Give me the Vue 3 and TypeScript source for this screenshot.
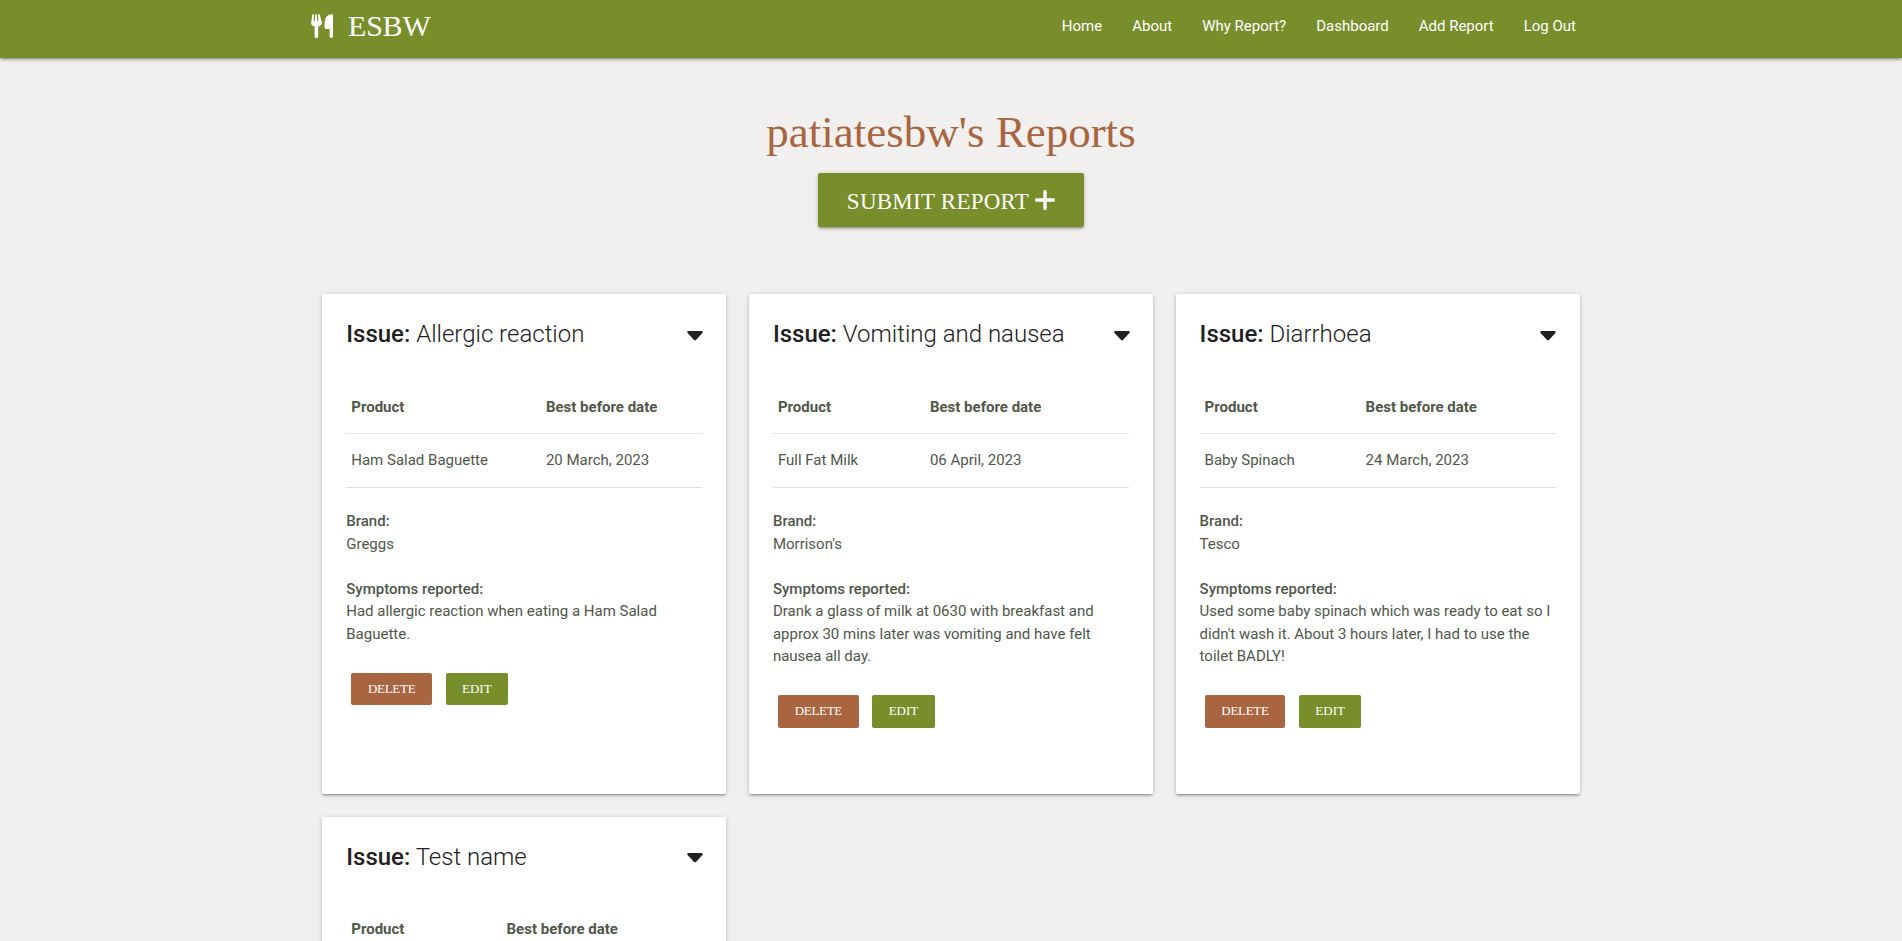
<script setup lang="ts">
interface Report {
  issue: string
  product: string
  date: string
  brand: string
  symptoms: string
  split: string
}

const links: string[] = ['Home', 'About', 'Why Report?', 'Dashboard', 'Add Report', 'Log Out']

const reports: Report[] = [
  { issue: 'Allergic reaction', product: 'Ham Salad Baguette', date: '20 March, 2023', brand: 'Greggs', symptoms: 'Had allergic reaction when eating a Ham Salad Baguette.', split: '194.7px' },
  { issue: 'Vomiting and nausea', product: 'Full Fat Milk', date: '06 April, 2023', brand: "Morrison's", symptoms: 'Drank a glass of milk at 0630 with breakfast and approx 30 mins later was vomiting and have felt nausea all day.', split: '152px' },
  { issue: 'Diarrhoea', product: 'Baby Spinach', date: '24 March, 2023', brand: 'Tesco', symptoms: "Used some baby spinach which was ready to eat so I didn't wash it. About 3 hours later, I had to use the toilet BADLY!", split: '161px' },
  { issue: 'Test name', product: 'Test product', date: '20 March, 2023', brand: 'Test brand', symptoms: 'Test symptoms.', split: '155.3px' },
]
</script>

<template>
  <div class="page">
    <nav class="nav">
      <div class="container nav-inner">
        <a class="brand">
          <svg class="cutlery" viewBox="0 0 22 24">
            <path d="M.2 8.2 1.4.6Q1.5 0 2.1 0T2.8.7V6.5Q2.8 7.2 3.3 7.2T3.8 6.5L4.3.7Q4.4 0 5 0T5.7.7L6.2 6.5Q6.2 7.2 6.7 7.2T7.2 6.5V.7Q7.2 0 7.9 0T8.7.6L10.8 8.2Q11.2 11.5 7.2 12.6V22.5Q7.2 24 5.4 24T3.6 22.5V12.6Q-.4 11.5.2 8.2Z" />
            <path d="M20.8 0Q22 0 22 1.3V22.6Q22 24 20.3 24T18.6 22.5V15H15Q13.6 15 13.6 13.7V8.5Q13.6 1 20.8 0Z" />
          </svg>
          <span>ESBW</span>
        </a>
        <ul class="links">
          <li v-for="link in links" :key="link">{{ link }}</li>
        </ul>
      </div>
    </nav>

    <main class="container">
      <header class="heading">
        <h1>patiatesbw's Reports</h1>
        <button class="submit">
          <span>SUBMIT REPORT</span>
          <svg class="plus" viewBox="0 0 20 20"><path d="M10 1.6V18.4M1.6 10H18.4" /></svg>
        </button>
      </header>

      <section class="grid">
        <article v-for="report in reports" :key="report.issue" class="card">
          <div class="card-title">
            <span><b>Issue:</b> {{ report.issue }}</span>
            <svg class="caret" viewBox="0 0 16 10"><path d="M1.3 0H14.7Q16.5.5 15.4 2L9.2 8.8Q8 9.8 6.8 8.8L.6 2Q-.5.5 1.3 0Z" /></svg>
          </div>
          <div class="table" :style="{ '--split': report.split }">
            <div class="row head"><span>Product</span><span>Best before date</span></div>
            <div class="row"><span>{{ report.product }}</span><span>{{ report.date }}</span></div>
          </div>
          <p><b>Brand:</b><br />{{ report.brand }}</p>
          <p><b>Symptoms reported:</b><br />{{ report.symptoms }}</p>
          <div class="actions">
            <button class="small delete">DELETE</button>
            <button class="small edit">EDIT</button>
          </div>
        </article>
      </section>
    </main>
  </div>
</template>

<style>
body {
  background: #f1f0ee;
}
</style>

<style scoped>
.page {
  height: 941px;
  overflow: hidden;
  background: #f1f0ee;
  color: #4f5749;
  font: 15px/22.5px Roboto, sans-serif;
}
.container {
  width: 1280px;
  margin: 0 auto;
}
.nav {
  height: 58px;
  background: #788e2b;
  color: #fff;
  box-shadow: 0 2px 2px 0 rgba(0, 0, 0, 0.14), 0 3px 1px -2px rgba(0, 0, 0, 0.12), 0 1px 5px 0 rgba(0, 0, 0, 0.2);
}
.nav-inner {
  display: flex;
  justify-content: space-between;
  align-items: center;
  height: 52px;
}
.brand {
  display: flex;
  align-items: center;
  gap: 15px;
  font: 30px/52px 'Liberation Serif', serif;
  letter-spacing: -0.2px;
}
.cutlery {
  width: 22px;
  height: 24px;
  fill: #fff;
}
.links {
  display: flex;
  margin: 0;
  padding: 0;
  list-style: none;
  font-weight: 400;
}
.links li {
  padding: 0 15px;
}
.heading {
  display: flex;
  flex-direction: column;
  align-items: center;
  height: 236px;
}
h1 {
  margin: 49px 0 0;
  color: #a86540;
  font: 45px/50px 'Liberation Serif', serif;
}
.submit {
  display: flex;
  align-items: center;
  justify-content: center;
  gap: 6px;
  width: 266px;
  height: 54px;
  margin-top: 16px;
  padding: 0;
  border: 0;
  border-radius: 2px;
  background: #788e2b;
  color: #fff;
  font: 23px/52px 'Liberation Serif', serif;
  letter-spacing: 0.25px;
  box-shadow: 0 2px 2px 0 rgba(0, 0, 0, 0.14), 0 3px 1px -2px rgba(0, 0, 0, 0.12), 0 1px 5px 0 rgba(0, 0, 0, 0.2);
}
.submit span {
  padding-top: 3px;
}
.plus {
  width: 20px;
  height: 20px;
  fill: none;
  stroke: #fff;
  stroke-width: 3.4;
  stroke-linecap: round;
}
.grid {
  display: grid;
  grid-template-columns: repeat(3, 1fr);
  gap: 22.77px 22.5px;
  padding: 0 11.25px;
}
.card {
  box-sizing: border-box;
  height: 500px;
  padding: 24px;
  border-radius: 2px;
  background: #fff;
  box-shadow: 0 2px 2px 0 rgba(0, 0, 0, 0.14), 0 3px 1px -2px rgba(0, 0, 0, 0.12), 0 1px 5px 0 rgba(0, 0, 0, 0.2);
}
.card-title {
  display: flex;
  justify-content: space-between;
  align-items: center;
  height: 32px;
  color: #212121;
  font-size: 24px;
  font-weight: 300;
}
b {
  font-weight: 500;
}
.caret {
  width: 16px;
  height: 10px;
  margin: 3px -0.5px 0 0;
  fill: #212121;
}
.table {
  margin-top: 30.7px;
}
.row {
  display: grid;
  grid-template-columns: var(--split) 1fr;
  padding: 15px 0;
  border-bottom: 1px solid rgba(0, 0, 0, 0.12);
}
.row span {
  padding-left: 5px;
}
.head {
  font-weight: 700;
}
p {
  margin: 22.5px 0 0;
}
.actions {
  display: flex;
  gap: 13.6px;
  margin: 27.6px 0 0 5px;
}
.small {
  height: 32.4px;
  padding: 0 0 1px;
  border: 0;
  border-radius: 2px;
  color: #fff;
  font: 13px/31px 'Liberation Serif', serif;
}
.delete {
  width: 80.8px;
  background: #a86540;
  letter-spacing: -0.3px;
}
.edit {
  width: 62.3px;
  background: #788e2b;
}
</style>
